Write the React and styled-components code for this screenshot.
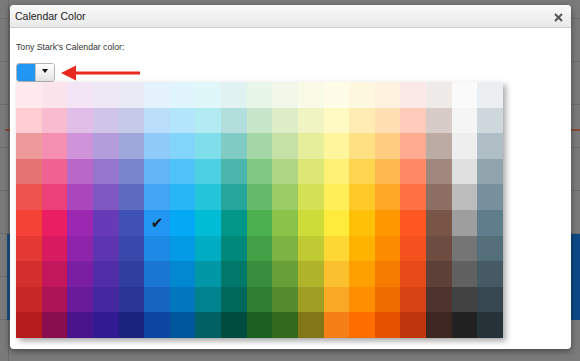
import React from 'react';
import styled, { createGlobalStyle } from 'styled-components';

const GlobalStyle = createGlobalStyle`
  html, body {
    margin: 0;
    padding: 0;
    background: #7a7a7a;
  }
  body {
    font-family: 'Liberation Sans', Arial, sans-serif;
  }
`;

// dimmed calendar page behind the modal
const Backdrop = styled.div`
  width: 580px;
  height: 361px;
  box-sizing: border-box;
  padding: 5px 9px 0 10px;
  overflow: hidden;
  background:
    linear-gradient(#8a4a38, #8a4a38) 5px 129px / 5px 2px no-repeat,
    linear-gradient(#8a4a38, #8a4a38) 571px 129px / 9px 2px no-repeat,
    linear-gradient(#1d4e80, #1d4e80) 7px 234px / 3px 86px no-repeat,
    linear-gradient(#0e4a86, #0e4a86) 571px 234px / 9px 86px no-repeat,
    linear-gradient(to right, transparent 8px, #6a6a6a 8px, #6a6a6a 9px, transparent 9px),
    repeating-linear-gradient(to bottom, transparent 0 18px, #6c6c6c 18px 19px, transparent 19px 43px),
    #7a7a7a;
`;

const Dialog = styled.div`
  width: 561px;
  height: 344px;
  background: #fff;
  border-radius: 4px;
  box-shadow: 0 2px 6px rgba(0, 0, 0, 0.45);
  display: flex;
  flex-direction: column;
`;

const Header = styled.div`
  height: 22px;
  flex-shrink: 0;
  display: flex;
  align-items: center;
  justify-content: space-between;
  padding: 0 8px 0 5px;
  background: linear-gradient(#f9f9f9, #e9e9e9);
  border-bottom: 1px solid #c9c9c9;
  border-radius: 4px 4px 0 0;
`;

const Title = styled.h1`
  margin: 0;
  font-size: 10.5px;
  font-weight: normal;
  color: #222;
`;

const CloseButton = styled.button`
  border: 0;
  padding: 0;
  background: none;
  width: 9px;
  height: 9px;
  display: flex;
  cursor: pointer;
  margin-top: 2px;
`;

const Body = styled.div`
  flex: 1;
  padding: 14px 6px 0;
`;

const Label = styled.div`
  font-size: 8.7px;
  color: #333;
  line-height: 11px;
  margin-bottom: 10px;
`;

const PickerRow = styled.div`
  display: flex;
  align-items: center;
  gap: 6px;
`;

const PickerWrap = styled.div`
  position: relative;
`;

const SwatchButton = styled.div`
  display: flex;
  width: 39px;
  height: 19px;
  box-sizing: border-box;
  border: 1px solid #b4b4b4;
  border-radius: 3px;
  overflow: hidden;
`;

const Swatch = styled.div`
  width: 18px;
  background: ${(p) => p.color};
`;

const Toggle = styled.div`
  flex: 1;
  display: flex;
  align-items: center;
  justify-content: center;
  padding-bottom: 4px;
  background: linear-gradient(#ffffff, #e4e4e4);
  border-left: 1px solid #c4c4c4;
`;

const Caret = styled.div`
  width: 0;
  height: 0;
  border-left: 3px solid transparent;
  border-right: 3px solid transparent;
  border-top: 4px solid #111;
`;

const Palette = styled.div`
  position: absolute;
  top: 100%;
  left: 0;
  width: 487px;
  height: 256px;
  display: grid;
  grid-template-columns: repeat(19, 1fr);
  grid-template-rows: repeat(10, 1fr);
  grid-auto-flow: column;
  box-shadow: 3px 3px 6px rgba(0, 0, 0, 0.35);
  z-index: 2;
`;

const Cell = styled.div`
  background: ${(p) => p.color};
  display: flex;
  align-items: center;
  justify-content: center;
  color: #1a1a1a;
  font-family: 'DejaVu Sans', sans-serif;
  font-size: 15px;
  line-height: 1;
  padding-top: 1px;
`;

const palette = [
  ['#FFEBEE', '#FFCDD2', '#EF9A9A', '#E57373', '#EF5350', '#F44336', '#E53935', '#D32F2F', '#C62828', '#B71C1C'],
  ['#FCE4EC', '#F8BBD0', '#F48FB1', '#F06292', '#EC407A', '#E91E63', '#D81B60', '#C2185B', '#AD1457', '#880E4F'],
  ['#F3E5F5', '#E1BEE7', '#CE93D8', '#BA68C8', '#AB47BC', '#9C27B0', '#8E24AA', '#7B1FA2', '#6A1B9A', '#4A148C'],
  ['#EDE7F6', '#D1C4E9', '#B39DDB', '#9575CD', '#7E57C2', '#673AB7', '#5E35B1', '#512DA8', '#4527A0', '#311B92'],
  ['#E8EAF6', '#C5CAE9', '#9FA8DA', '#7986CB', '#5C6BC0', '#3F51B5', '#3949AB', '#303F9F', '#283593', '#1A237E'],
  ['#E3F2FD', '#BBDEFB', '#90CAF9', '#64B5F6', '#42A5F5', '#2196F3', '#1E88E5', '#1976D2', '#1565C0', '#0D47A1'],
  ['#E1F5FE', '#B3E5FC', '#81D4FA', '#4FC3F7', '#29B6F6', '#03A9F4', '#039BE5', '#0288D1', '#0277BD', '#01579B'],
  ['#E0F7FA', '#B2EBF2', '#80DEEA', '#4DD0E1', '#26C6DA', '#00BCD4', '#00ACC1', '#0097A7', '#00838F', '#006064'],
  ['#E0F2F1', '#B2DFDB', '#80CBC4', '#4DB6AC', '#26A69A', '#009688', '#00897B', '#00796B', '#00695C', '#004D40'],
  ['#E8F5E9', '#C8E6C9', '#A5D6A7', '#81C784', '#66BB6A', '#4CAF50', '#43A047', '#388E3C', '#2E7D32', '#1B5E20'],
  ['#F1F8E9', '#DCEDC8', '#C5E1A5', '#AED581', '#9CCC65', '#8BC34A', '#7CB342', '#689F38', '#558B2F', '#33691E'],
  ['#F9FBE7', '#F0F4C3', '#E6EE9C', '#DCE775', '#D4E157', '#CDDC39', '#C0CA33', '#AFB42B', '#9E9D24', '#827717'],
  ['#FFFDE7', '#FFF9C4', '#FFF59D', '#FFF176', '#FFEE58', '#FFEB3B', '#FDD835', '#FBC02D', '#F9A825', '#F57F17'],
  ['#FFF8E1', '#FFECB3', '#FFE082', '#FFD54F', '#FFCA28', '#FFC107', '#FFB300', '#FFA000', '#FF8F00', '#FF6F00'],
  ['#FFF3E0', '#FFE0B2', '#FFCC80', '#FFB74D', '#FFA726', '#FF9800', '#FB8C00', '#F57C00', '#EF6C00', '#E65100'],
  ['#FBE9E7', '#FFCCBC', '#FFAB91', '#FF8A65', '#FF7043', '#FF5722', '#F4511E', '#E64A19', '#D84315', '#BF360C'],
  ['#EFEBE9', '#D7CCC8', '#BCAAA4', '#A1887F', '#8D6E63', '#795548', '#6D4C41', '#5D4037', '#4E342E', '#3E2723'],
  ['#FAFAFA', '#F5F5F5', '#EEEEEE', '#E0E0E0', '#BDBDBD', '#9E9E9E', '#757575', '#616161', '#424242', '#212121'],
  ['#ECEFF1', '#CFD8DC', '#B0BEC5', '#90A4AE', '#78909C', '#607D8B', '#546E7A', '#455A64', '#37474F', '#263238'],
];

const selected = '#2196F3';

const App = () => {
  return (
    <>
      <GlobalStyle />
      <Backdrop>
        <Dialog>
          <Header>
            <Title>Calendar Color</Title>
            <CloseButton aria-label='Close'>
              <svg width='9' height='9' viewBox='0 0 9 9'>
                <path d='M1 1L8 8M8 1L1 8' stroke='#555' strokeWidth='2' />
              </svg>
            </CloseButton>
          </Header>
          <Body>
            <Label>Tony Stark's Calendar color:</Label>
            <PickerRow>
              <PickerWrap>
                <SwatchButton>
                  <Swatch color={selected} />
                  <Toggle>
                    <Caret />
                  </Toggle>
                </SwatchButton>
                <Palette>
                  {palette.flat().map((c) => (
                    <Cell key={c} color={c}>
                      {c === selected ? '✔' : null}
                    </Cell>
                  ))}
                </Palette>
              </PickerWrap>
              <svg width='80' height='16' viewBox='0 0 80 16'>
                <path d='M0 8L15 0.5V15.5Z' fill='#e8291c' />
                <rect x='13' y='6.5' width='66' height='3' fill='#e8291c' />
              </svg>
            </PickerRow>
          </Body>
        </Dialog>
      </Backdrop>
    </>
  );
};

export default App;
